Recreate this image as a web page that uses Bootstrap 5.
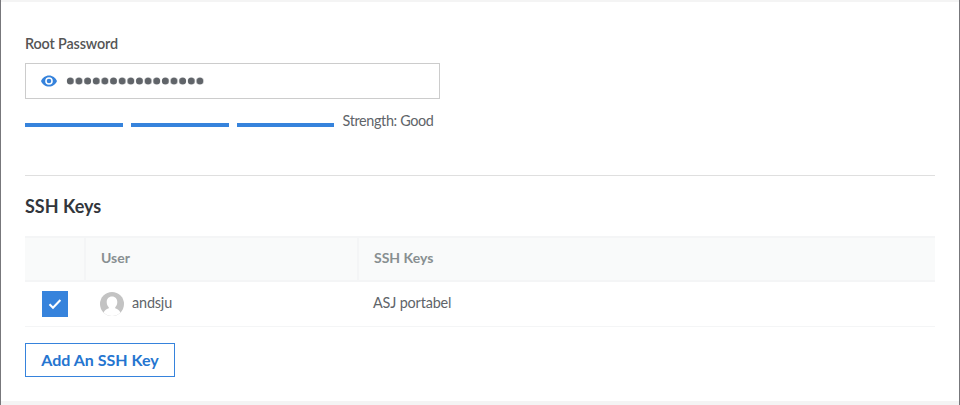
<!DOCTYPE html>
<html lang="en">
<head>
<meta charset="utf-8">
<meta name="viewport" content="width=device-width, initial-scale=1">
<title>Root Password and SSH Keys</title>
<link href="https://cdn.jsdelivr.net/npm/bootstrap@5.3.0/dist/css/bootstrap.min.css" rel="stylesheet">
<style>
  body { font-family: Lato, sans-serif; font-size: 14.4px; letter-spacing: -.15px; line-height: 18px; color: #606469; background: #f4f4f4; overflow: hidden; }
  .frame { height: 405px; border: solid #77777b; border-width: 0 1px; padding: 2px 0 4px; }
  .panel { height: 399px; padding: 33px 24px 0; }
  .pw-label { font-size: 14.4px; color: #555; margin-bottom: 10px; }
  .pw-box { width: 415px; height: 36px; border: 1px solid #ccc; padding-left: 15px; }
  .pw-dots { margin-left: 9px; }
  .strength { width: 415px; height: 18px; margin-top: 13px; }
  .strength-text { letter-spacing: -.35px; padding-left: .5px; }
  .bar { width: 98px; height: 4px; margin-top: 11px; background: #3683dc; }
  .bar-last { width: 97px; }
  .rule { height: 1px; margin-top: 45px; background: #dfdfdf; }
  .title { font-size: 18px; letter-spacing: 0; line-height: 22px; color: #32363c; margin: 19px 0 19px; }
  .keys { table-layout: fixed; width: 910px; border-collapse: separate; border-spacing: 0; }
  .keys th { height: 46px; padding: 0 15px 2px; background: #f9fafa; border: solid #f4f5f6; border-width: 2px 0 2px 2px; color: #888f91; font-weight: 700; font-size: 14px; letter-spacing: 0; }
  .keys th:first-child { border-left: 0; }
  .keys td { height: 45px; padding: 0 16px; border-bottom: 1px solid #f4f5f6; }
  .user-name, .key-name { padding-bottom: 2px; }
  .tick { width: 26px; height: 26px; background: #3683dc; margin-left: 1px; }
  .btn-add { width: 150px; height: 34px; margin-top: 16px; padding: 0; border: 1px solid #3683dc; border-radius: 0; color: #2575d0; font-size: 16px; letter-spacing: 0; font-weight: 700; line-height: 32px; }
</style>
<script src="https://cdn.jsdelivr.net/npm/bootstrap@5.3.0/dist/js/bootstrap.bundle.min.js"></script>
</head>
<body>
<main class="frame">
  <div class="panel bg-white">
    <div class="pw-label fw-semibold">Root Password</div>
    <div class="pw-box d-flex align-items-center">
      <svg width="16" height="12" viewBox="0 0 16 12" aria-label="Show password"><path fill="#3683dc" fill-rule="evenodd" d="M8 .4C4.4.4 1.3 2.7 0 6c1.3 3.3 4.4 5.6 8 5.6s6.700-2.300 8-5.600C14.700 2.700 11.600.4 8 .4Zm0 9.400A3.800 3.800 0 1 1 8 2.200a3.800 3.800 0 0 1 0 7.600Zm0-6.100a2.300 2.300 0 1 0 0 4.600 2.300 2.300 0 0 0 0-4.600Z"/></svg>
      <svg class="pw-dots" width="140" height="8" aria-label="Password"><defs><pattern id="dots" width="8.640" height="8" patternUnits="userSpaceOnUse"><circle cx="4.320" cy="4" r="3.500" fill="#606469"/></pattern></defs><rect width="138.240" height="8" fill="url(#dots)"/></svg>
    </div>
    <div class="strength d-flex gap-2">
      <div class="bar"></div><div class="bar"></div><div class="bar bar-last"></div>
      <div class="strength-text text-nowrap">Strength: Good</div>
    </div>
    <div class="rule"></div>
    <h2 class="title fw-bold">SSH Keys</h2>
    <table class="keys">
      <colgroup><col style="width:59px"><col style="width:273px"><col></colgroup>
      <thead><tr><th></th><th>User</th><th>SSH Keys</th></tr></thead>
      <tbody><tr>
        <td><div class="tick d-flex align-items-center justify-content-center"><svg width="14" height="12" viewBox="0 0 14 12" aria-label="Selected"><path d="M1.500 6.200 5 9.700l7.400-7.600" fill="none" stroke="#fff" stroke-width="2.100"/></svg></div></td>
        <td><div class="d-flex align-items-center gap-2"><svg width="24" height="24" viewBox="0 0 24 24" aria-hidden="true"><defs><clipPath id="round"><circle cx="12" cy="12" r="12"/></clipPath></defs><g clip-path="url(#round)"><rect width="24" height="24" fill="#c3c3c3"/><path fill="#fff" d="M12 4.500c3.300 0 5.300 2.300 5.300 5.600 0 2.100-.8 4-2.100 5.200v1c2.600.8 4.500 2.100 5.300 4.600V24h-17v-3.100c.8-2.500 2.700-3.800 5.300-4.600v-1c-1.300-1.200-2.100-3.100-2.100-5.200 0-3.300 2-5.600 5.300-5.600Z"/></g></svg><span class="user-name">andsju</span></div></td>
        <td><div class="key-name">ASJ portabel</div></td>
      </tr></tbody>
    </table>
    <button class="btn btn-add d-block" type="button">Add An SSH Key</button>
  </div>
</main>
</body>
</html>
